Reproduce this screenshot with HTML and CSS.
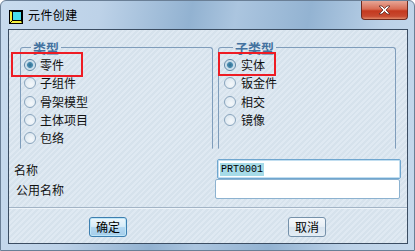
FILE: index.html
```html
<!DOCTYPE html>
<html lang="zh-CN">
<head>
<meta charset="UTF-8">
<title>元件创建</title>
<link rel="stylesheet" href="styles.css">
</head>
<body>
    <div class="window">
        <div class="titlebar">
            <svg class="app-icon" width="14" height="14" viewBox="0 0 14 14">
                <rect x="0.5" y="0.5" width="13" height="13" fill="#f4f040" stroke="#000"/>
                <rect x="3.5" y="1.5" width="9" height="9" fill="#48dfee" stroke="#000"/>
                <path d="M0.5 0.5 L3.5 1.5 M0.5 13.5 L3.5 10.5 M12.5 10.5 L13.5 13.5" stroke="#000"/>
            </svg>
            <span class="title">元件创建</span>
            <div class="close">
                <svg width="13" height="10" viewBox="0 0 13 10">
                    <path d="M1 1 H4 L6.5 3.5 L9 1 H12 L8 5 L12 9 H9 L6.5 6.5 L4 9 H1 L5 5 Z" fill="#fff" stroke="#5a2a24" stroke-width="0.8"/>
                </svg>
            </div>
        </div>
        <div class="content">
            <div class="groups">
                <fieldset class="group group-type">
                    <legend>类型</legend>
                    <div class="opt"><span class="radio checked"></span>零件<span class="mark mark-left"></span></div>
                    <div class="opt"><span class="radio"></span>子组件</div>
                    <div class="opt"><span class="radio"></span>骨架模型</div>
                    <div class="opt"><span class="radio"></span>主体项目</div>
                    <div class="opt"><span class="radio"></span>包络</div>
                </fieldset>
                <fieldset class="group group-sub">
                    <legend>子类型</legend>
                    <div class="opt"><span class="radio checked"></span>实体<span class="mark mark-right"></span></div>
                    <div class="opt"><span class="radio"></span>钣金件</div>
                    <div class="opt"><span class="radio"></span>相交</div>
                    <div class="opt"><span class="radio"></span>镜像</div>
                </fieldset>
            </div>
            <div class="fields">
                <div class="field">
                    <span class="label">名称</span>
                    <div class="input focused"><span class="sel">PRT0001</span></div>
                </div>
                <div class="field">
                    <span class="label label-common">公用名称</span>
                    <div class="input input-common"></div>
                </div>
            </div>
            <div class="separator"></div>
            <div class="buttons">
                <button class="btn default">确定</button>
                <button class="btn">取消</button>
            </div>
        </div>
    </div>
</body>
</html>
```
FILE: styles.css
```css
body {
    margin: 0;
    width: 415px;
    height: 251px;
    overflow: hidden;
    font-family: "Noto Sans CJK SC", "DejaVu Sans", sans-serif;
    font-size: 12px;
    color: #111;
}
.window {
    width: 415px;
    height: 251px;
    box-sizing: border-box;
    display: flex;
    flex-direction: column;
    border: 1px solid #6a7f96;
    border-radius: 6px 6px 0 0;
    background: linear-gradient(100deg, #c8dbee 0%, #bdd2e8 22%, #92b2d1 42%, #abc5df 52%, #93b3d2 68%, #bcd2e8 85%, #c6d9ec 100%);
}
.titlebar {
    height: 28px;
    display: flex;
    align-items: flex-start;
}
.app-icon {
    margin: 9px 0 0 8px;
}
.title {
    margin: 6px 0 0 5px;
    line-height: 16px;
    font-size: 12px;
    letter-spacing: 0.4px;
    color: #000;
}
.close {
    margin-left: auto;
    margin-right: 6px;
    width: 47px;
    height: 19px;
    box-sizing: border-box;
    border: 1px solid #6e2b20;
    border-top: none;
    border-radius: 0 0 4px 4px;
    background: linear-gradient(#e6a696 0%, #d86c54 45%, #c4391f 55%, #c84a30 85%, #e08a6a 100%);
    display: flex;
    align-items: center;
    justify-content: center;
}
.content {
    flex: 1;
    margin: 0 6px 6px 7px;
    border: 1px solid #3b4d62;
    background-color: #dce7f0;
    background-image: repeating-linear-gradient(135deg, #dfe9f2 0 2px, #d6e2ec 2px 4px);
    display: flex;
    flex-direction: column;
}
.groups {
    display: flex;
    margin-top: 11px;
    padding-left: 11px;
    gap: 5px;
}
.group {
    margin: 0;
    height: 108px;
    box-sizing: border-box;
    border: 1px solid #7f9dbb;
    border-bottom-color: transparent;
    border-radius: 3px 3px 0 0;
    padding: 2px 0 0 3px;
}
.group-type {
    width: 193px;
}
.group-sub {
    width: 178px;
    padding-left: 5px;
}
.group legend {
    padding: 0 2px;
    margin-left: 7px;
    font-size: 13px;
    line-height: 13px;
    font-weight: bold;
    color: #44729f;
}
.group-sub legend {
    margin-left: 9px;
}
.opt {
    position: relative;
    height: 18.25px;
    display: flex;
    align-items: center;
    gap: 4px;
    line-height: 14px;
}
.group-sub .opt {
    gap: 5px;
}
.radio {
    width: 12px;
    height: 12px;
    box-sizing: border-box;
    border-radius: 50%;
    border: 1px solid #8aa5bd;
    background: radial-gradient(circle at 60% 65%, #f4f8fb 0%, #dfe9f1 70%, #c9d8e5 100%);
}
.radio.checked {
    background: radial-gradient(circle, #2f6b8c 0%, #4d8fb3 38%, #b9d3e4 45%, #eef4f8 80%);
    border-color: #5f87a6;
}
.mark {
    position: absolute;
    top: -4px;
    height: 25px;
    box-sizing: border-box;
    border: 2px solid #ee1c24;
}
.mark-left {
    left: -13px;
    width: 72px;
}
.mark-right {
    left: -6px;
    width: 58px;
    height: 24px;
}
.fields {
    margin-top: 10px;
}
.field {
    display: flex;
    align-items: center;
    height: 20px;
    padding-left: 5px;
}
.label {
    width: 203px;
}
.label-common {
    padding-left: 2px;
    width: 200px;
}
.input {
    width: 184px;
    height: 20px;
    box-sizing: border-box;
    border: 1px solid #8cb2d0;
    border-radius: 2px;
    background: #fff;
    display: flex;
    align-items: center;
    padding-left: 2px;
}
.input.focused {
    border-color: #6fa6cf;
    box-shadow: inset 0 0 0 1px #c2def0;
}
.input-common {
    width: 185px;
    margin-left: -1px;
}
.sel {
    background: #a6dbe8;
    font-family: "Liberation Mono", monospace;
    font-size: 10px;
    line-height: 13px;
    color: #000;
    padding: 0 1px;
}
.separator {
    margin-top: 8px;
    height: 1px;
    background: #a2b4c6;
    border-bottom: 1px solid #eef4f9;
}
.buttons {
    display: flex;
    gap: 161px;
    padding-left: 80px;
    margin-top: 8px;
}
.btn {
    width: 38px;
    height: 20px;
    padding: 0;
    border: 1px solid #7591aa;
    border-radius: 3px;
    background: linear-gradient(#f5f8fb, #e6eef5 50%, #d6e3ee 51%, #e4edf5);
    font-family: "Noto Sans CJK SC", sans-serif;
    font-size: 12px;
    line-height: 16px;
    color: #000;
}
.btn.default {
    border-color: #3d7fb0;
    box-shadow: inset 0 0 0 1px #bfe6f7;
    background: linear-gradient(#eef7fc, #d5ebf8 50%, #b4d9f2 51%, #a5cdea);
}
```
